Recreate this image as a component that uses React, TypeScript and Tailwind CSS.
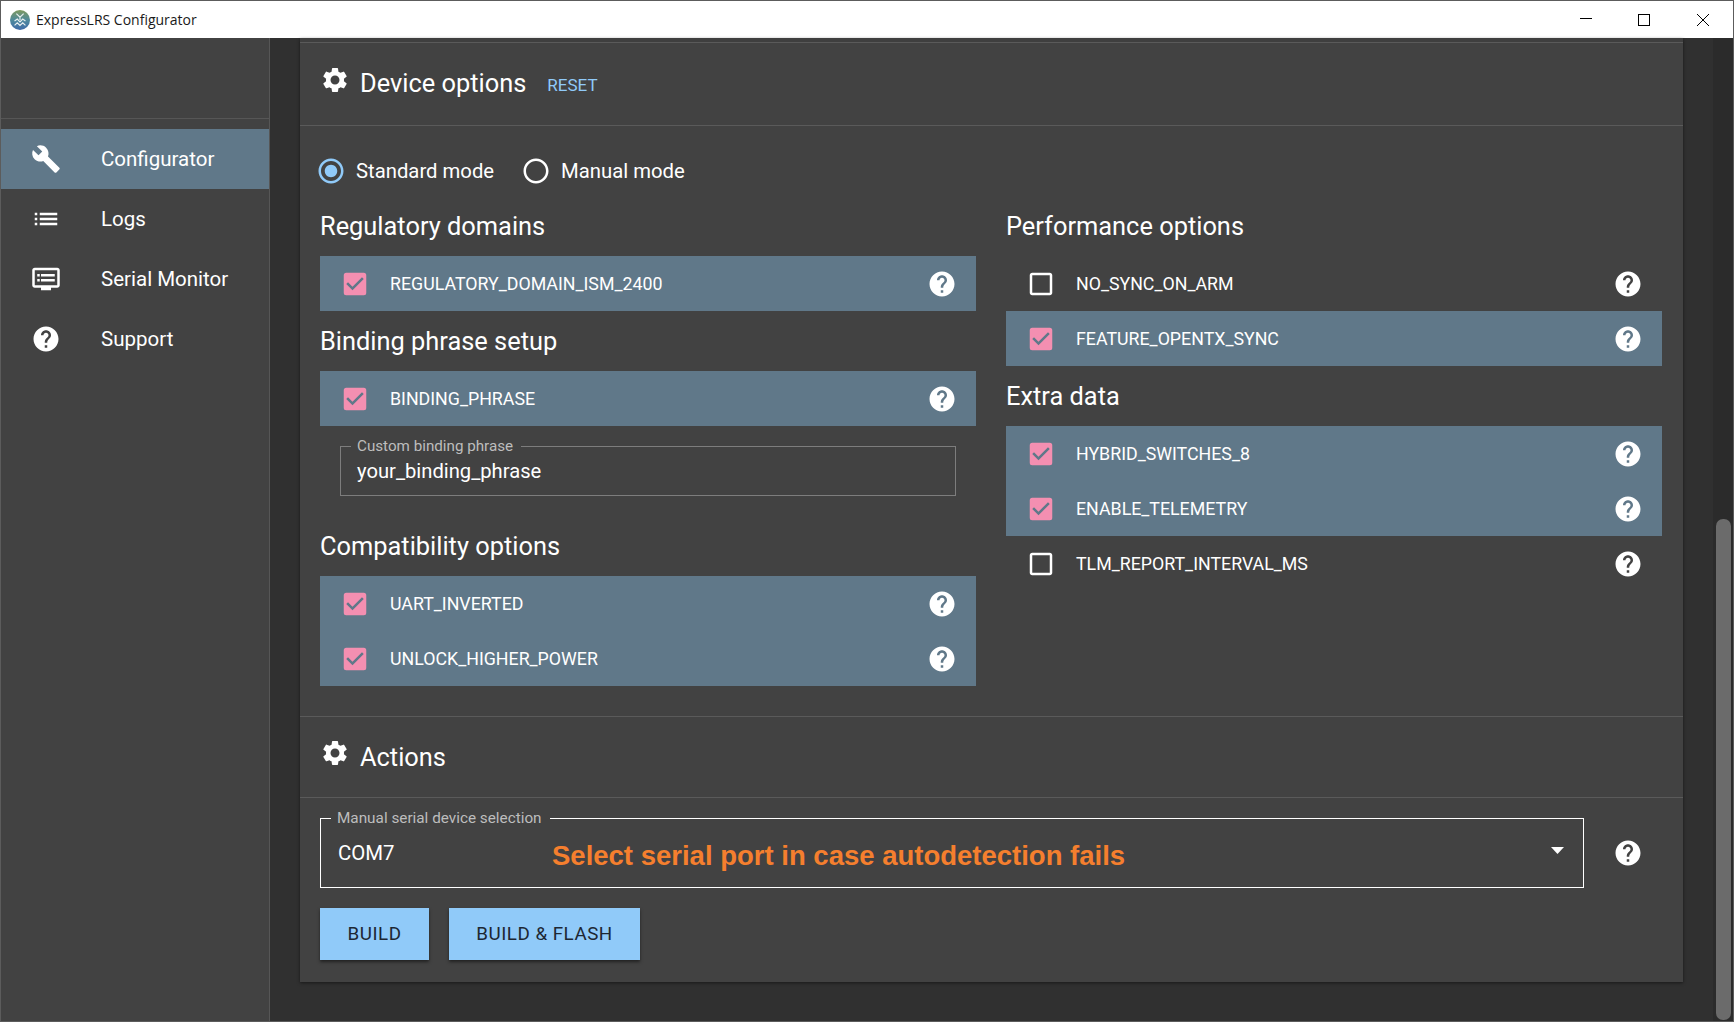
import React from "react";
import {
  MdBuild,
  MdList,
  MdDvr,
  MdHelp,
  MdSettings,
  MdCheckBox,
  MdCheckBoxOutlineBlank,
  MdRadioButtonChecked,
  MdRadioButtonUnchecked,
} from "react-icons/md";

function NavItem({ icon, label, active }: { icon: React.ReactNode; label: string; active?: boolean }) {
  return (
    <div className={`flex h-[60px] items-center pl-[30px] text-[20.5px] text-white ${active ? "bg-[#607889]" : ""}`}>
      <span className="flex w-[30px] justify-center">{icon}</span>
      <span className="ml-[40px]">{label}</span>
    </div>
  );
}

function Row({ label, checked }: { label: string; checked?: boolean }) {
  return (
    <div className={`flex h-[55px] items-center pl-[20px] pr-[19px] text-[17.8px] text-white ${checked ? "bg-[#607889]" : ""}`}>
      {checked ? (
        <MdCheckBox size={30} className="text-[#f48fb1]" />
      ) : (
        <MdCheckBoxOutlineBlank size={30} className="text-white" />
      )}
      <span className="ml-[20px] flex-1 pt-[1px]">{label}</span>
      <MdHelp size={30} className="text-white" />
    </div>
  );
}

function Heading({ children }: { children: React.ReactNode }) {
  return <h3 className="flex h-[60px] items-center pt-[1px] text-[25.4px] text-white">{children}</h3>;
}

function SectionHeader({ title, children, h, titleClass }: { title: string; children?: React.ReactNode; h: string; titleClass: string }) {
  return (
    <div className={`flex ${h} items-center border-b border-[#5a5a5a] pl-[20px] text-white`}>
      <MdSettings size={30} className="-mt-[8px]" />
      <span className={`ml-[10px] text-[25.4px] ${titleClass}`}>{title}</span>
      {children}
    </div>
  );
}

export default function App() {
  return (
    <div className="flex h-[1022px] w-[1734px] flex-col overflow-hidden border-t border-r border-b border-l border-[#5c5c5c] font-['Roboto',sans-serif]">
      <header className="flex h-[37px] shrink-0 items-center bg-white">
        <svg width="20" height="20" viewBox="0 0 22 22" className="ml-[9px]">
          <defs>
            <linearGradient id="logo" x1="0" y1="0" x2="0" y2="1">
              <stop offset="0" stopColor="#7f9a5e" />
              <stop offset="0.5" stopColor="#4f8a9c" />
              <stop offset="1" stopColor="#3f6aa8" />
            </linearGradient>
          </defs>
          <circle cx="11" cy="11" r="11" fill="url(#logo)" />
          <path d="M7 4l4 4 4-4M11 8v3M5 12l3-2 3 3 3-3 3 2M5 17l3-3 3 3 3-3 3 3" stroke="#e8eef0" strokeWidth="1.3" fill="none" />
        </svg>
        <span className="ml-[6px] font-['Open_Sans',sans-serif] text-[14px] text-[#1a1a1a]">ExpressLRS Configurator</span>
        <div className="ml-auto flex items-center">
          <svg width="14" height="14" viewBox="0 0 14 14" className="mr-[44px]">
            <path d="M1 5.5h12" stroke="#000" strokeWidth="1" />
          </svg>
          <svg width="14" height="14" viewBox="0 0 14 14" className="mr-[45px]">
            <rect x="1.5" y="1.5" width="11" height="11" fill="none" stroke="#000" strokeWidth="1" />
          </svg>
          <svg width="14" height="14" viewBox="0 0 14 14" className="mr-[23px]">
            <path d="M1 1l12 12M13 1L1 13" stroke="#000" strokeWidth="1" />
          </svg>
        </div>
      </header>

      <div className="flex min-h-0 flex-1">
        <aside className="w-[269px] shrink-0 border-r border-[#565656] bg-[#424242]">
          <div className="h-[81px] border-b border-[#565656]" />
          <nav className="pt-[10px]">
            <NavItem active label="Configurator" icon={<MdBuild size={30} />} />
            <NavItem label="Logs" icon={<MdList size={30} />} />
            <NavItem label="Serial Monitor" icon={<MdDvr size={30} />} />
            <NavItem label="Support" icon={<MdHelp size={30} />} />
          </nav>
        </aside>

        <main className="min-w-0 flex-1 bg-[#303030] pl-[30px] pr-[30px]">
          <div className="w-[1383px] bg-[#424242] shadow-[0_1px_3px_rgba(0,0,0,0.5)]">
            <div className="h-[5px] border-b border-[#5a5a5a] bg-[#3f3f3f]" />
            <SectionHeader title="Device options" h="h-[83px]" titleClass="-mt-[1px]">
              <span className="ml-[21px] mt-[3px] text-[17px] text-[#90caf9]">RESET</span>
            </SectionHeader>

            <div className="border-b border-[#5a5a5a] px-[20px] pb-[30px]">
              <div className="mt-[28px] mb-[8px] flex h-[34px] items-center text-[20.3px] text-white">
                <MdRadioButtonChecked size={30} className="-ml-[4px] text-[#90caf9]" />
                <span className="ml-[10px]">Standard mode</span>
                <MdRadioButtonUnchecked size={30} className="ml-[27px] text-white" />
                <span className="ml-[10px]">Manual mode</span>
              </div>

              <div className="grid grid-cols-[656px_656px] gap-x-[30px]">
                <div>
                  <Heading>Regulatory domains</Heading>
                  <Row checked label="REGULATORY_DOMAIN_ISM_2400" />
                  <Heading>Binding phrase setup</Heading>
                  <Row checked label="BINDING_PHRASE" />
                  <div className="relative mx-[20px] mt-[20px] mb-[20px] flex h-[50px] items-center border border-[#7d7d7d] pl-[16px] text-[20.2px] text-white">
                    <span className="absolute -top-[10px] left-[10px] bg-[#424242] pl-[6px] pr-[8px] text-[15.2px] leading-[18px] text-[#bdbdbd]">
                      Custom binding phrase
                    </span>
                    your_binding_phrase
                  </div>
                  <Heading>Compatibility options</Heading>
                  <Row checked label="UART_INVERTED" />
                  <Row checked label="UNLOCK_HIGHER_POWER" />
                </div>
                <div>
                  <Heading>Performance options</Heading>
                  <Row label="NO_SYNC_ON_ARM" />
                  <Row checked label="FEATURE_OPENTX_SYNC" />
                  <Heading>Extra data</Heading>
                  <Row checked label="HYBRID_SWITCHES_8" />
                  <Row checked label="ENABLE_TELEMETRY" />
                  <Row label="TLM_REPORT_INTERVAL_MS" />
                </div>
              </div>
            </div>

            <SectionHeader title="Actions" h="h-[81px]" titleClass="mt-[1px]" />

            <div className="px-[20px] pt-[20px] pb-[22px]">
              <div className="flex items-center">
                <div className="relative flex h-[70px] w-[1264px] items-center border border-white pl-[17px] text-[20.4px] text-white">
                  <span className="absolute -top-[10px] left-[10px] bg-[#424242] pl-[6px] pr-[8px] text-[15.3px] leading-[18px] text-[#bdbdbd]">
                    Manual serial device selection
                  </span>
                  <span>COM7</span>
                  <span className="absolute left-[231px] top-[21px] font-['Liberation_Sans',sans-serif] text-[27.5px] leading-[32px] font-bold text-[#f57f2e]">
                    Select serial port in case autodetection fails
                  </span>
                  <svg width="13" height="7" viewBox="0 0 13 7" className="absolute right-[19px] top-[28px]">
                    <path d="M0 0h13L6.5 7z" fill="#fff" />
                  </svg>
                </div>
                <MdHelp size={30} className="ml-[29px] text-white" />
              </div>
              <div className="mt-[20px] flex gap-[20px]">
                <button className="h-[52px] w-[109px] bg-[#90caf9] text-[18.8px] tracking-[0.5px] text-[#1d2733] shadow-[0_2px_3px_rgba(0,0,0,0.5)]">
                  BUILD
                </button>
                <button className="h-[52px] w-[191px] bg-[#90caf9] text-[18.8px] tracking-[0.5px] text-[#1d2733] shadow-[0_2px_3px_rgba(0,0,0,0.5)]">
                  BUILD &amp; FLASH
                </button>
              </div>
            </div>
          </div>
        </main>

        <div className="flex w-[20px] shrink-0 flex-col justify-end bg-[#2b2b2b] pb-[1px] pl-[3px] pr-[2px]">
          <div className="h-[501px] rounded-[7px] bg-[#6b6b6b]" />
        </div>
      </div>
    </div>
  );
}
